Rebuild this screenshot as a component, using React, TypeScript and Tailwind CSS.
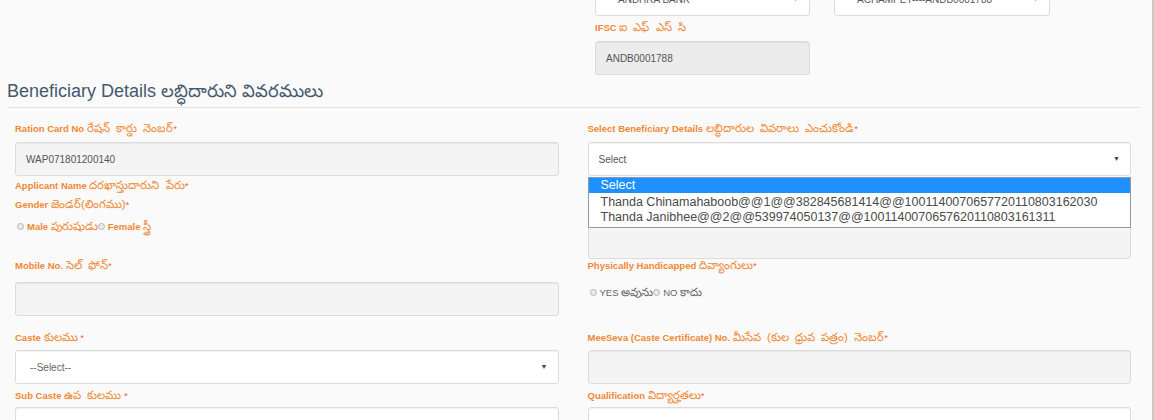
const labelCls = 'block h-4 text-[9.5px] leading-4 text-[#ef8833] mb-1.5 whitespace-nowrap';
const teCls = 'text-[11.5px] leading-4 [word-spacing:3px]';
const inputBase = 'h-[34px] w-full rounded-[3px] border border-[#dcdcdc] shadow-[inset_0_1px_1px_rgba(0,0,0,0.06)] flex items-center px-2.5 text-[10px] text-[#555]';

function Label({ en, te, star = '*' }: { en: string; te: string; star?: string }) {
  return (
    <label className={labelCls}>
      <span className="font-bold">{en}</span> <span className={teCls}>{te}</span>
      <span className="text-[#e0703a]">{star}</span>
    </label>
  );
}

function Caret() {
  return <span className="ml-auto text-[7px] text-[#444]">▼</span>;
}

function Radio() {
  return <span className="inline-block w-[7px] h-[7px] rounded-full border border-[#b5b5b5] bg-[#eaeaea] mr-[3px]" />;
}

export default function App() {
  return (
    <div className="h-[420px] w-[1154px] overflow-hidden bg-[#fafafa] border-r-2 border-[#c9c9c9]" style={{ fontFamily: "'Liberation Sans', Arial, sans-serif" }}>
      {/* bank / branch / ifsc */}
      <div className="flex gap-[24px] pl-[595px] -mt-[18px]">
        <div className="w-[215px]">
          <div className={`${inputBase} bg-white text-[10.5px]`}>
            <span className="pl-3">ANDHRA BANK</span>
            <Caret />
          </div>
          <label className="block h-4 text-[9.5px] leading-4 text-[#ef8833] mt-[3px] mb-1.5">
            <span className="font-bold">IFSC</span> <span className={teCls}>ఐ ఎఫ్ ఎస్ సి</span>
          </label>
          <div className={`${inputBase} h-[32px] bg-[#ececec]`}>ANDB0001788</div>
        </div>
        <div className="w-[216px]">
          <div className={`${inputBase} bg-white text-[10.5px]`}>
            <span className="pl-3">ACHAMPET----ANDB0001788</span>
            <Caret />
          </div>
        </div>
      </div>

      {/* section heading */}
      <div className="px-[7px] pr-[12px] mt-[4px]">
        <h3 className="text-[18px] leading-6 text-[#45586e]">Beneficiary Details లబ్ధిదారుని వివరములు</h3>
        <hr className="mt-1 border-t border-[#e3e3e3]" />
      </div>

      <div className="pl-[15px] pr-[21px] mt-3">
        {/* row 1 */}
        <div className="grid grid-cols-2 gap-[29px]">
          <div>
            <Label en="Ration Card No" te="రేషన్ కార్డు నెంబర్" />
            <div className={`${inputBase} bg-[#f4f4f4]`}>WAP071801200140</div>
          </div>
          <div className="relative">
            <Label en="Select Beneficiary Details" te="లబ్ధిదారుల వివరాలు ఎంచుకోండి" />
            <div className={`${inputBase} bg-white text-[10.5px] border-[#66afe9] shadow-[0_0_4px_rgba(102,175,233,0.6)]`}>
              <span>Select</span>
              <Caret />
            </div>
            {/* open dropdown list */}
            <div className="absolute left-0 right-0 top-[57px] z-10 bg-white border border-[#8a9bb0] text-[12.5px] leading-[15px] text-[#4a4a4a] pb-[2px]">
              <div className="bg-[#1e90ff] text-white pl-3">Select</div>
              <div className="pl-3 mt-[2px]">Thanda Chinamahaboob@@1@@382845681414@@1001140070657720110803162030</div>
              <div className="pl-3">Thanda Janibhee@@2@@539974050137@@1001140070657620110803161311</div>
            </div>
          </div>
        </div>

        {/* row 2 */}
        <div className="grid grid-cols-2 gap-[29px] mt-[1px]">
          <div>
            <Label en="Applicant Name" te="దరఖాస్తుదారుని పేరు" />
            <div className="-mt-[3px]">
              <Label en="Gender" te="జెండర్(లింగము)" />
            </div>
            <div className="h-4 text-[9.5px] leading-4 text-[#ef8833] pl-[2px] whitespace-nowrap">
              <Radio />
              <span className="font-bold">Male</span> <span className={teCls}>పురుషుడు</span>
              <Radio />
              <span className="font-bold">Female</span> <span className={teCls}>స్త్రీ</span>
            </div>
          </div>
          <div>
            <Label en="Aadhaar No" te="ఆధార్ నెంబర్" />
            <div className={`${inputBase} bg-[#f4f4f4] mt-[32px]`} />
          </div>
        </div>

        {/* row 3 */}
        <div className="grid grid-cols-2 gap-[29px] -mt-[2px]">
          <div>
            <Label en="Mobile No." te="సెల్ ఫోన్" />
            <div className={`${inputBase} h-[33px] bg-[#f4f4f4] mt-[9px]`} />
          </div>
          <div>
            <Label en="Physically Handicapped" te="దివ్యాంగులు" />
            <div className="h-4 text-[9.5px] leading-4 text-[#666] mt-[11px] pl-[2px] whitespace-nowrap">
              <Radio />
              YES <span className={teCls}>అవును</span>
              <Radio />
              NO <span className={teCls}>కాదు</span>
            </div>
          </div>
        </div>

        {/* row 4 */}
        <div className="grid grid-cols-2 gap-[29px] mt-[13px]">
          <div>
            <Label en="Caste" te="కులము" star=" *" />
            <div className={`${inputBase} bg-white -mt-[1px]`}>
              <span className="pl-1 text-[#666]">--Select--</span>
              <Caret />
            </div>
          </div>
          <div>
            <Label en="MeeSeva (Caste Certificate) No." te="మీసేవ (కుల ధ్రువ పత్రం) నెంబర్" />
            <div className={`${inputBase} bg-[#f4f4f4] -mt-[1px]`} />
          </div>
        </div>

        {/* row 5 */}
        <div className="grid grid-cols-2 gap-[29px] mt-[3px]">
          <div>
            <Label en="Sub Caste" te="ఉప కులము" star=" *" />
            <div className={`${inputBase} bg-white -mt-[2px]`} />
          </div>
          <div>
            <Label en="Qualification" te="విద్యార్హతలు" />
            <div className={`${inputBase} bg-white -mt-[2px]`} />
          </div>
        </div>
      </div>
    </div>
  );
}
